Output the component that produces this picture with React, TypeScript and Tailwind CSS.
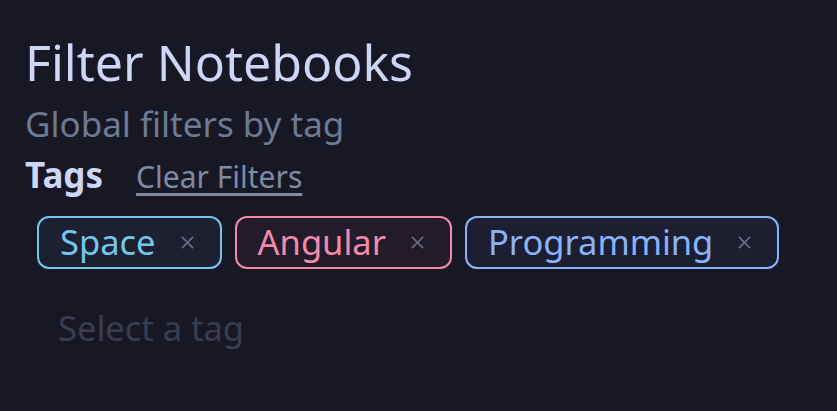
import React from "react";

// -----------------------------------------------------------------
const tags = [
  { name: "Space", text: "text-[#74c7ec]", border: "border-[#74c7ec]", bg: "bg-[#1c2030]" },
  { name: "Angular", text: "text-[#f38ba8]", border: "border-[#f38ba8]", bg: "bg-[#211b2a]" },
  { name: "Programming", text: "text-[#89b4fa]", border: "border-[#89b4fa]", bg: "bg-[#1d1f30]" },
];

const CloseIcon = () => (
  <svg width="15" height="15" viewBox="0 0 16 16" fill="none" stroke="currentColor" strokeWidth="1.6">
    <path d="M2 2L14 14M14 2L2 14" />
  </svg>
);

const App = () => {
  return (
    <div
      className="h-[411px] w-[837px] bg-[#181825] px-[25px] pt-[30px]"
      style={{ fontFamily: '"Noto Sans", sans-serif' }}
    >
      {/* header */}
      <h1 className="text-[50px] leading-[64px] font-normal text-[#cdd6f4]">Filter Notebooks</h1>
      <p className="mt-[7px] text-[35px] leading-[46px] text-[#6c7a93]">Global filters by tag</p>

      {/* tags row */}
      <div className="mt-[5px] flex items-baseline gap-[33px]">
        <span className="text-[35px] leading-[46px] font-bold text-[#cdd6f4]">Tags</span>
        <button className="text-[30px] leading-[46px] text-[#7f8aa3] underline underline-offset-[5px]">
          Clear Filters
        </button>
      </div>

      {/* multi select */}
      <div className="mt-[16px] pl-[12px]">
        <div className="flex flex-wrap gap-[13px]">
          {tags.map((tag) => (
            <div
              key={tag.name}
              className={`flex h-[53px] items-center gap-[24px] rounded-[12px] border-2 pl-[21px] pr-[25px] ${tag.border} ${tag.bg}`}
            >
              <span className={`text-[34.5px] leading-none ${tag.text}`}>{tag.name}</span>
              <span className="text-[#6c7086]">
                <CloseIcon />
              </span>
            </div>
          ))}
        </div>
        <div className="mt-[36px] pl-[21px] text-[34.5px] leading-[46px] text-[#3a3d50]">Select a tag</div>
      </div>
    </div>
  );
};

export default App;
